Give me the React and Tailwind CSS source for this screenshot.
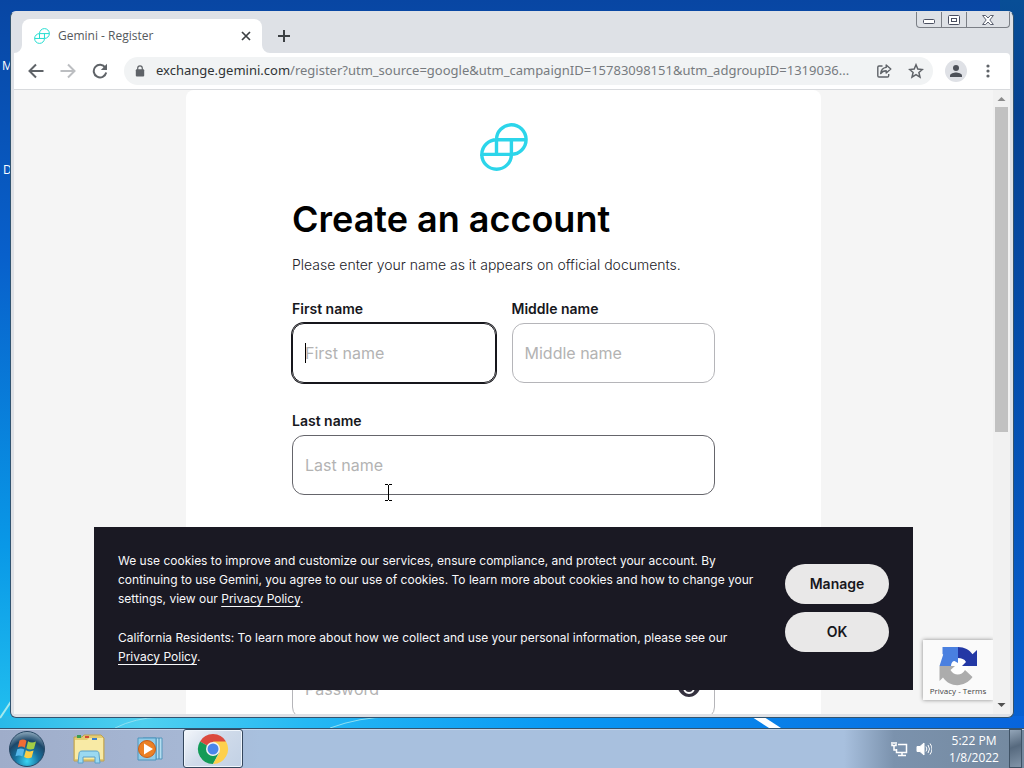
import { useState } from "react";

function GeminiMark({ className, width }) {
  return (
    <svg viewBox="0 0 48 48" className={className} fill="none" stroke="currentColor" strokeWidth={width} aria-hidden="true">
      <path d="M16.5 31.3V16.8a14.8 14.8 0 1 1 14.8 14.6H1.8a14.8 14.8 0 0 1 14.8-14.6h29.5" />
      <path d="M1.8 31.4a14.8 14.8 0 0 0 29.6 0V16.8" />
    </svg>
  );
}

function TabStrip() {
  return (
    <header className="flex h-[41px] shrink-0 items-start pl-2">
      <div className="relative mt-[7px] flex h-[34px] w-60 items-center rounded-t-lg bg-white pr-2 pl-3">
        <svg viewBox="0 0 8 8" className="absolute bottom-0 -left-2 size-2 fill-white" aria-hidden="true"><path d="M8 0v8H0a8 8 0 0 0 8-8z" /></svg>
        <svg viewBox="0 0 8 8" className="absolute -right-2 bottom-0 size-2 fill-white" aria-hidden="true"><path d="M0 0v8h8a8 8 0 0 1-8-8z" /></svg>
        <GeminiMark className="size-4 text-[#26ddd0]" width={3} />
        <span className="ml-2 flex-1 text-xs text-[#55595d]">Gemini - Register</span>
        <button aria-label="Close tab" className="grid size-4 place-items-center text-[#3c4043]">
          <svg viewBox="0 0 10 10" className="size-[10px]" stroke="currentColor" strokeWidth="1.7"><path d="M1 1l8 8M9 1L1 9" /></svg>
        </button>
      </div>
      <button aria-label="New tab" className="mt-4 ml-[14px] grid size-4 place-items-center text-[#3c4043]">
        <svg viewBox="0 0 12 12" className="size-3" stroke="currentColor" strokeWidth="2"><path d="M6 0v12M0 6h12" /></svg>
      </button>
      <div className="ml-auto flex h-4 divide-x divide-[#7b7f86] rounded-b-[4px] border border-t-0 border-[#7b7f86] text-[#4a4f60]">
        <button aria-label="Minimize" className="grid w-[25px] place-items-center">
          <svg viewBox="0 0 12 5" className="mt-1 h-[5px] w-3" fill="#fff" stroke="currentColor"><rect x=".5" y=".5" width="11" height="4" rx="1" /></svg>
        </button>
        <button aria-label="Maximize" className="grid w-[25px] place-items-center">
          <svg viewBox="0 0 12 10" className="h-[10px] w-3" fill="#fff" stroke="currentColor"><rect x=".5" y=".5" width="11" height="9" rx="1" /><rect x="3.5" y="3.5" width="5" height="3" /></svg>
        </button>
        <button aria-label="Close window" className="grid w-[42px] place-items-center">
          <svg viewBox="0 0 12 10" className="h-[10px] w-3" fill="#fff" stroke="currentColor" strokeWidth=".9"><path d="M.6.5h3L6 3 8.4.5h3L7.8 5l3.6 4.5h-3L6 7 3.6 9.5h-3L4.2 5z" /></svg>
        </button>
      </div>
    </header>
  );
}

function Toolbar() {
  return (
    <nav className="flex h-9 shrink-0 items-center rounded-tr-sm bg-white pr-[14px] pl-[14px] text-[#5f6368]">
      <button aria-label="Back"><svg viewBox="0 0 16 16" className="size-4" fill="none" stroke="currentColor" strokeWidth="2"><path d="M15.5 8H2M8 1.500L1.500 8 8 14.500" /></svg></button>
      <button aria-label="Forward" className="ml-4 text-[#bcbec1]"><svg viewBox="0 0 16 16" className="size-4" fill="none" stroke="currentColor" strokeWidth="2"><path d="M.5 8H14M8 1.500L14.500 8 8 14.500" /></svg></button>
      <button aria-label="Reload" className="ml-4"><svg viewBox="0 0 16 16" className="size-4" fill="none" stroke="currentColor" strokeWidth="2"><path d="M13.300 4.600A6.300 6.300 0 1 0 14.200 9.500" /><path d="M15 .8V7H8.800z" fill="currentColor" stroke="none" /></svg></button>
      <div className="ml-4 flex h-7 min-w-0 flex-1 items-center rounded-full bg-[#f1f3f4] pr-[9px] pl-[11px]">
        <svg viewBox="0 0 10 12" className="h-3 w-[10px] shrink-0" aria-hidden="true"><rect x=".8" y="4.300" width="8.400" height="7.200" rx="1" fill="currentColor" /><path d="M2.700 5V3.200a2.300 2.300 0 0 1 4.600 0V5" fill="none" stroke="currentColor" strokeWidth="1.200" /></svg>
        <div className="ml-[11px] min-w-0 flex-1 overflow-hidden font-['Noto_Sans',sans-serif] text-[13px] whitespace-nowrap text-[#777b7f]"><span className="text-[#303336]">exchange.gemini.com</span>/register?utm_source=google&amp;utm_campaignID=15783098151&amp;utm_adgroupID=1319036...</div>
        <button aria-label="Share" className="ml-3"><svg viewBox="0 0 16 16" className="size-4" fill="none" stroke="currentColor" strokeWidth="1.400" strokeLinejoin="round"><path d="M6.500 3H3a1.200 1.200 0 0 0-1.200 1.200v8.600A1.200 1.200 0 0 0 3 14h8.500a1.200 1.200 0 0 0 1.200-1.200V11" /><path d="M10.200 2l4.600 4-4.600 4V7.700C7.500 7.700 5.800 8.700 4.700 10.600 5 7.300 6.800 4.900 10.200 4.400z" /></svg></button>
        <button aria-label="Bookmark this tab" className="ml-4"><svg viewBox="0 0 16 16" className="size-4" fill="none" stroke="currentColor" strokeWidth="1.500"><path d="M8 1.800l1.800 4.300 4.600.4-3.500 3 1.100 4.600L8 11.600l-4 2.500 1.100-4.600-3.500-3 4.600-.4z" /></svg></button>
      </div>
      <button aria-label="Profile" className="ml-3 grid size-[22px] place-items-center rounded-full bg-[#dfe1e6] text-[#4d5159]"><svg viewBox="0 0 14 14" className="size-[14px]" fill="currentColor"><circle cx="7" cy="4" r="3" /><path d="M1 13v-1.500C1 9.500 5 8.500 7 8.500s6 1 6 3V13z" /></svg></button>
      <button aria-label="Menu" className="ml-[13px]"><svg viewBox="0 0 16 16" className="size-4" fill="currentColor"><circle cx="8" cy="3" r="1.600" /><circle cx="8" cy="8" r="1.600" /><circle cx="8" cy="13" r="1.600" /></svg></button>
    </nav>
  );
}

function Field({ id, label, type = "text", caret, className = "", inputClass = "border border-[#b5b5b9]", children }) {
  const [value, setValue] = useState("");
  return (
    <div className={`relative mb-7 flex flex-col ${className}`}>
      <label htmlFor={id} className="h-6 text-sm leading-5 font-semibold text-[#17171c]">{label}</label>
      <input
        id={id}
        type={type}
        placeholder={label}
        value={value}
        onChange={(event) => setValue(event.target.value)}
        className={`h-[60px] w-full rounded-xl bg-transparent px-3 text-base text-[#17171c] outline-none placeholder:text-[#b3b3b3] ${inputClass}`}
      />
      {caret && <span className="absolute top-11 left-[13px] h-5 w-px bg-black" />}
      {children}
    </div>
  );
}

function RegisterForm() {
  return (
    <form className="mx-auto min-h-full w-full max-w-[635px] rounded-t-lg bg-white px-[106px] pt-[33px] font-[Inter,sans-serif]">
      <GeminiMark className="mx-auto size-12 text-[#2cd5ea]" width={3.4} />
      <h1 className="mt-6 text-4xl leading-[48px] font-semibold text-black">Create an account</h1>
      <p className="mt-3 mb-6 text-sm leading-5 font-light text-[#222228]">Please enter your name as it appears on official documents.</p>
      <div className="grid grid-cols-2 gap-x-4">
        <Field id="first" label="First name" caret inputClass="border border-[#17171c] ring-1 ring-[#17171c]" />
        <Field id="middle" label="Middle name" />
        <Field id="last" label="Last name" className="col-span-2" inputClass="border border-[#65656b]" />
        <Field id="email" label="Email" type="email" className="col-span-2" />
        <Field id="password" label="Password" type="password" className="col-span-2">
          <button type="button" aria-label="Show password" className="absolute top-[41px] right-[14px]"><svg viewBox="0 0 24 24" className="size-6" fill="none"><path d="M.5 12C3 6 7.500 3 12 3s9 3 11.500 9C21 18 16.500 21 12 21S3 18 .5 12z" fill="#35323f" /><circle cx="12" cy="12" r="5" stroke="#fff" strokeWidth="2" /></svg></button>
        </Field>
      </div>
    </form>
  );
}

function PrivacyLink() {
  return <a href="#privacy" className="underline decoration-1 underline-offset-[3px] [text-decoration-skip-ink:none]">Privacy Policy</a>;
}

function CookieBanner() {
  return (
    <section aria-label="Cookies" className="absolute inset-x-20 bottom-6 flex items-start gap-6 bg-[#1a1923] px-6 py-6 font-[Inter,sans-serif]">
      <div className="flex-1 text-xs leading-[19px] text-[#f8f8fa]">
        <p>We use cookies to improve and customize our services, ensure compliance, and protect your account. By continuing to use Gemini, you agree to our use of cookies. To learn more about cookies and how to change your settings, view our <PrivacyLink />.</p>
        <p className="mt-5">California Residents: To learn more about how we collect and use your personal information, please see our <PrivacyLink />.</p>
      </div>
      <div className="flex w-[104px] flex-col gap-2 pt-[13px]">
        <button className="h-10 rounded-full bg-[#e9e8e8] text-sm font-semibold text-[#17171c]">Manage</button>
        <button className="h-10 rounded-full bg-[#e9e8e8] text-sm font-semibold text-[#17171c]">OK</button>
      </div>
    </section>
  );
}

function Recaptcha() {
  return (
    <aside className="absolute right-0 bottom-[14px] flex h-[60px] w-[70px] flex-col items-center overflow-hidden bg-[#fafafa] pt-[6px] shadow-[0_0_4px_#888]">
      <svg viewBox="0 0 40 40" className="size-10" aria-hidden="true">
        <circle cx="20" cy="20" r="10" fill="#fff" />
        <path d="M20 1C13.500 1 8.500 4 5.300 8.200L1.500 20H13c0-3 1.500-5 3.500-5L20 17z" fill="#4a80e0" />
        <path d="M4.500 1v7L13 14.500 20 8V1z" fill="#4a80e0" />
        <path d="M20 1c6.500 0 11.500 3 14.500 7.200L39 4v16H24l4-4c-1.500-3-4.500-4-8-4z" fill="#2338a5" />
        <path d="M1.500 20H17l-4.500 4c3.500 6 11 6 14.500 0l7.500 7C27 41.500 12 42 5 31.500L1.500 35z" fill="#acacac" />
      </svg>
      <p className="text-[8px] leading-[10px] text-[#444]"><a href="#recaptcha">Privacy</a> - <a href="#terms">Terms</a></p>
    </aside>
  );
}

function Scrollbar() {
  return (
    <div className="flex w-[17px] shrink-0 flex-col items-center bg-[#f1f1f1]">
      <svg viewBox="0 0 17 17" className="size-[17px] shrink-0 fill-[#8b8b8b]" aria-hidden="true"><path d="M4.500 11l4-4 4 4z" /></svg>
      <div className="w-full flex-1 px-[2px]"><div className="h-[55%] bg-[#c1c1c1]" /></div>
      <svg viewBox="0 0 17 17" className="size-[17px] shrink-0 fill-[#505050]" aria-hidden="true"><path d="M4.500 6l4 4 4-4z" /></svg>
    </div>
  );
}

function Taskbar() {
  return (
    <footer className="flex h-10 shrink-0 items-stretch border-t border-[#33536f] bg-[linear-gradient(to_right,#9fadca,#a6b7d4_180px,#a8c0de_260px,#a8c0de_calc(100%-180px),#7b92ad_calc(100%-130px),#74899f)] shadow-[inset_0_1px_0_#c5d6ea]">
      <button aria-label="Start" className="ml-2 self-center">
        <svg viewBox="0 0 38 38" className="size-[38px]">
          <defs><radialGradient id="orb" cx=".5" cy=".85" r=".85"><stop offset="0" stopColor="#39d5f3" /><stop offset=".4" stopColor="#17719e" /><stop offset=".7" stopColor="#1c4769" /><stop offset="1" stopColor="#90acbf" /></radialGradient></defs>
          <circle cx="19" cy="19" r="17.500" fill="url(#orb)" stroke="#284865" />
          <path d="M11.500 10.500c3-1.500 5-1 7 .3l-1.700 7c-2-1.500-4.500-1.500-7-.4z" fill="#ef6c35" />
          <path d="M20 11.300c2.500 1.500 5 1.600 8 .2l-2 7.200c-3 1.200-5.400.8-7.600-.5z" fill="#a2cc45" />
          <path d="M9.300 19.200c2.700-1.100 5-1 7 .4l-1.900 7c-2.200-1.500-4.500-1.400-7-.3z" fill="#55b7eb" />
          <path d="M17.900 20.200c2.400 1.500 5 1.600 7.700.4l-2 7c-2.900 1.200-5.200.8-7.500-.6z" fill="#fbce45" />
        </svg>
      </button>
      <button aria-label="Windows Explorer" className="ml-[26px] self-center">
        <svg viewBox="0 0 34 32" className="h-8 w-[34px]">
          <path d="M2 4h8l2-2h17l3 3v23H2z" fill="#e4cc72" stroke="#bda154" />
          <path d="M3 7h12l2-2h14v21H3z" fill="#f8eaa5" />
          <path d="M5 2h4v3H5z" fill="#3b9e51" /><path d="M13 3h4v2h-4z" fill="#d34a34" /><path d="M20 5h5v2h-5z" fill="#3c7ecb" />
          <path d="M6 30l1-9c0-2 1-3 3-3h14c2 0 3 1 3 3l1 9h-5v-6H11v6z" fill="#9bd9f1" stroke="#5aa0ca" />
        </svg>
      </button>
      <button aria-label="Windows Media Player" className="ml-[30px] self-center">
        <svg viewBox="0 0 30 28" className="h-7 w-[30px]">
          <path d="M7 3h19v21H7z" fill="#b6def0" stroke="#5296bd" /><path d="M20 3v21M23 3v21" stroke="#4186ae" />
          <path d="M2 3h18v22H2z" fill="#91cce8" stroke="#4c95bd" /><circle cx="11" cy="14" r="8.500" fill="#ec8125" stroke="#c65e19" /><path d="M8 8.500v11l9-5.500z" fill="#fff" />
        </svg>
      </button>
      <button aria-label="Google Chrome" className="ml-[17px] grid w-[60px] place-items-center rounded-[3px] border border-[#34465c] bg-[linear-gradient(135deg,#f4f7fb,#d0dbea_45%,#c2d1e5)] shadow-[inset_0_0_0_1px_#f0f6fc]">
        <svg viewBox="0 0 32 32" className="size-8">
          <path d="M16 16L3 8.500a15 15 0 0 1 26 0z" fill="#db4a3e" />
          <path d="M16 16L3 8.500A15 15 0 0 0 16 31l6-11.500z" fill="#139b57" />
          <path d="M16 8.500h13A15 15 0 0 1 16 31l6.500-11.500z" fill="#fed04c" />
          <circle cx="16" cy="16" r="7" fill="#f4f4f4" /><circle cx="16" cy="16" r="5.500" fill="#4a86ec" />
        </svg>
      </button>
      <div className="ml-auto flex items-center text-white">
        <svg viewBox="0 0 17 16" className="h-4 w-[17px]" fill="none" stroke="#fff" strokeWidth="1.500" aria-label="Network"><path d="M7 3.500h8.500v8H5.500V8M11 11.500V14M7 14.500h8M1 1v3.500h4V1M3 1v2M3 5v4h2" /></svg>
        <svg viewBox="0 0 16 16" className="ml-2 size-4" fill="none" stroke="#fff" aria-label="Volume"><path d="M1 5.500h3L8 2v12l-4-3.500H1z" fill="#fff" /><path d="M10 5.500q1.800 2.500 0 5M12 4q3 4 0 8M14 2.500q4 5.500 0 11" /></svg>
        <time className="ml-[15px] w-[54px] text-center text-xs leading-[17px]">5:22 PM<br />1/8/2022</time>
        <button aria-label="Show desktop" className="mr-[2px] ml-2 h-full w-[13px] border border-[#3f5265] bg-[linear-gradient(160deg,#93a5b8,#56697e_45%,#8194a8)]" />
      </div>
    </footer>
  );
}

function Wallpaper() {
  return (
    <svg viewBox="0 0 1024 728" preserveAspectRatio="none" className="absolute inset-0 size-full" aria-hidden="true">
      <defs>
        <linearGradient id="sky" x1="0" y1="0" x2="0" y2="1"><stop offset="0" stopColor="#0846a3" /><stop offset=".35" stopColor="#0860cb" /><stop offset=".75" stopColor="#0998e7" /><stop offset="1" stopColor="#22c0ef" /></linearGradient>
        <linearGradient id="east" x1="0" y1="0" x2="0" y2="1"><stop offset="0" stopColor="#084e96" /><stop offset=".15" stopColor="#054292" /><stop offset="1" stopColor="#0660d2" /></linearGradient>
        <linearGradient id="floor"><stop offset="0" stopColor="#29b9e8" /><stop offset=".14" stopColor="#4fd0f0" /><stop offset=".3" stopColor="#25b8f3" /><stop offset=".55" stopColor="#0898f4" /><stop offset="1" stopColor="#0864dc" /></linearGradient>
      </defs>
      <path d="M0 0h1024v728H0z" fill="url(#sky)" />
      <path d="M1000 0h24v728h-24z" fill="url(#east)" />
      <path d="M0 716h1024v12H0z" fill="url(#floor)" />
      <path d="M0 718L12 700" stroke="#a5e9ee" strokeWidth="2" fill="none" />
      <path d="M115 728q20-10 45-11M330 728q30-11 60-11" stroke="#8fe0f2" fill="none" />
      <path d="M752 717h12l17 11h-12z" fill="#fff" />
    </svg>
  );
}

export default function App() {
  return (
    <div className="flex h-screen flex-col overflow-hidden font-['Open_Sans','Noto_Sans',sans-serif]">
      <main className="relative flex min-h-0 flex-1 flex-col px-[10px] pt-[11px] pb-[10px]">
        <Wallpaper />
        <span className="absolute top-[58px] left-[2px] text-xs text-white">M</span>
        <span className="absolute top-[162px] left-[3px] text-xs text-white">D</span>
        <div className="relative flex min-h-0 flex-1 flex-col rounded-md border border-[#31536f] border-t-[#dee1e6] bg-[#dee1e6] px-[3px] pb-[3px]">
          <TabStrip />
          <Toolbar />
          <div className="flex min-h-0 flex-1 border-t border-[#d8dadd] bg-[#f5f5f5]">
            <div className="relative min-w-0 flex-1 overflow-hidden">
              <RegisterForm />
              <svg viewBox="0 0 7 17" className="absolute top-[394px] left-[371px] h-[17px] w-[7px]" fill="none" stroke="#000" aria-hidden="true"><path d="M0 .5h3M4 .5h3M3.500 1v15M0 16.500h3M4 16.500h3" /></svg>
              <CookieBanner />
              <Recaptcha />
            </div>
            <Scrollbar />
          </div>
        </div>
      </main>
      <Taskbar />
    </div>
  );
}
